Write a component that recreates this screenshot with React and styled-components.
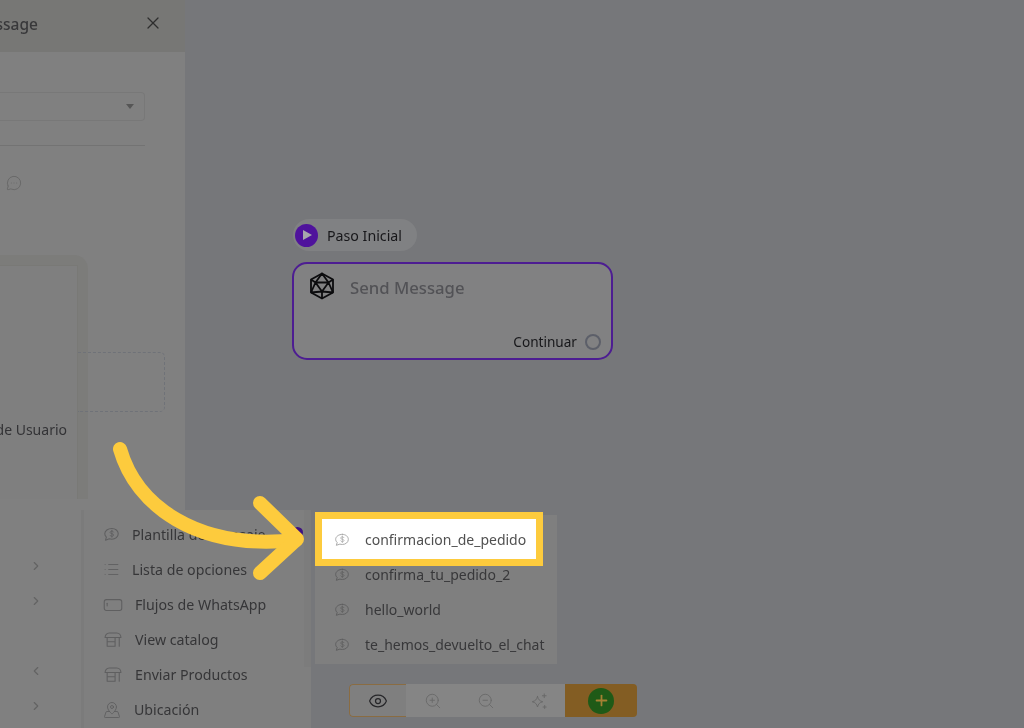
import React from 'react';
import styled, { createGlobalStyle } from 'styled-components';
import { X, Eye, ZoomIn, ZoomOut, Plus, ChevronRight, ChevronLeft, List, MapPinned, MessageCircleMore } from 'lucide-react';

const GlobalStyle = createGlobalStyle`
html, body {
  margin: 0;
  padding: 0;
  background: #76777a;
  font-family: "Noto Sans", "Open Sans", sans-serif;
}
`

const DollarChat = ({ size = 18 }) => (
  <svg width={size} height={size} viewBox="0 0 24 24" fill="none" stroke="currentColor" strokeWidth="1.5" strokeLinecap="round" strokeLinejoin="round">
    <path d="M12.5 3.5c5 0 9 3.3 9 7.6s-4 7.6-9 7.6c-1.3 0-2.5-.2-3.6-.6L3.5 20l1.3-4.3c-1.4-1.3-2.3-2.9-2.3-4.6 0-4.3 4.5-7.6 10-7.6z" />
    <path d="M15 8.5c-.5-.8-1.5-1.2-2.5-1.2-1.4 0-2.5.7-2.5 1.800 0 2.400 5 1.200 5 3.600 0 1.100-1.100 1.800-2.500 1.800-1 0-2-.4-2.500-1.200M12.500 6v9.800" strokeWidth="1.2" />
  </svg>
)

const FlowIcon = () => (
  <svg width="20" height="20" viewBox="0 0 24 24" fill="none" stroke="currentColor" strokeWidth="1.3" strokeLinecap="round">
    <rect x="1.500" y="5.500" width="21" height="13" rx="2.500" />
    <path d="M5 10v3" />
  </svg>
)

const StoreIcon = () => (
  <svg width="20" height="20" viewBox="0 0 24 24" fill="none" stroke="currentColor" strokeWidth="1.3" strokeLinecap="round" strokeLinejoin="round">
    <path d="M2.500 9c0-3 2-5.500 5-5.500h9c3 0 5 2.500 5 5.500z" />
    <path d="M5 9v10.500h9.500V9M5 14h9.500M19.500 9v10.500" />
  </svg>
)

const SparkleIcon = () => (
  <svg width="18" height="18" viewBox="0 0 24 24" fill="none" stroke="currentColor" strokeWidth="1.3" strokeLinecap="round" strokeLinejoin="round">
    <path d="M10 6c.9 4 2.800 6 7 7-4.200 1-6.100 3-7 7-.9-4-2.800-6-7-7 4.200-1 6.100-3 7-7z" />
    <path d="M19 2.500v5M16.500 5h5M19.500 18v4M17.500 20h4" />
  </svg>
)

const NodeLogo = () => (
  <svg width="26" height="28" viewBox="0 0 26 28" fill="none" stroke="#0c0c0e" strokeWidth="1.8" strokeLinejoin="round">
    <path d="M13 1.500 24 7.500v13L13 26.500 2 20.500v-13z" />
    <path d="M13 1.500 6.500 10.500h13zM6.500 10.500 13 19.500l6.500-9zM2 7.500l4.500 3M24 7.500l-4.500 3M2 20.500 6.500 10.500M24 20.500 19.500 10.500M2 20.500 13 19.500 24 20.500M13 19.500v7" />
  </svg>
)

const Page = styled.div`
position: relative;
display: flex;
width: 1024px;
height: 728px;
overflow: hidden;
background: #76777a;
filter: blur(0.45px);
`

const SidePanel = styled.aside`
flex: 0 0 185px;
min-width: 0;
height: 100%;
display: flex;
flex-direction: column;
background: #808080;
`

const PanelHeader = styled.header`
flex: 0 0 52px;
display: flex;
align-items: center;
justify-content: flex-end;
gap: 105px;
padding: 0 22px 0 0;
background: #777775;
color: #2e2e2e;
svg {
  flex: none;
  margin-top: -7px;
}
`

const PanelTitle = styled.h2`
margin: -4px 0 0;
font-size: 15.5px;
font-weight: 500;
color: #38383a;
white-space: nowrap;
`

const PanelBody = styled.div`
flex: 1;
display: flex;
flex-direction: column;
padding: 40px 40px 0 0;
`

const SelectBox = styled.div`
height: 29px;
box-sizing: border-box;
display: flex;
align-items: center;
justify-content: flex-end;
padding-right: 10px;
border: 1px solid #787878;
border-left: none;
border-radius: 0 4px 4px 0;
`

const Caret = styled.span`
width: 0;
height: 0;
border-left: 4.5px solid transparent;
border-right: 4.5px solid transparent;
border-top: 5px solid #565656;
`

const Divider = styled.div`
height: 1px;
margin-top: 24px;
background: #737373;
`

const BubbleIcon = styled.div`
height: 18px;
margin-top: 28px;
padding-left: 6px;
color: #636363;
`

const CardArea = styled.div`
position: relative;
width: 88px;
height: 244px;
margin-top: 63px;
box-sizing: border-box;
padding: 10px 10px 0 0;
background: #7c7c7a;
border-radius: 0 14px 0 0;
`

const CardInner = styled.div`
position: relative;
height: 100%;
box-sizing: border-box;
background: #7f7f7f;
border-right: 1px solid #797976;
border-top: 1px solid #797976;
`

const UserLabel = styled.span`
position: absolute;
right: 10px;
top: 154px;
font-size: 14px;
color: #333336;
white-space: nowrap;
`

const DropSlot = styled.div`
position: absolute;
left: 78px;
top: 86px;
width: 87px;
height: 60px;
box-sizing: border-box;
border: 1px dashed #6f7278;
border-left: none;
border-radius: 0 5px 5px 0;
`

const SideChevrons = styled.div`
flex: 1;
display: flex;
flex-direction: column;
padding: 49px 0 0 29px;
color: #636363;
`

const ChevronSlot = styled.div`
height: 35px;
display: flex;
align-items: center;
`

const Canvas = styled.main`
position: relative;
flex: 1;
`

const StepBadge = styled.div`
position: absolute;
left: 108px;
top: 219px;
height: 32px;
display: flex;
align-items: center;
gap: 9px;
padding: 0 15px 0 2px;
border-radius: 16px;
background: #808183;
color: #17171a;
font-size: 14.2px;
`

const PlayCircle = styled.span`
width: 23px;
height: 23px;
display: flex;
align-items: center;
justify-content: center;
border-radius: 50%;
background: #4f139c;
&::after {
  content: "";
  margin-left: 2px;
  border-left: 9px solid #a7a7ac;
  border-top: 5.5px solid transparent;
  border-bottom: 5.5px solid transparent;
}
`

const FlowNode = styled.section`
position: absolute;
left: 107px;
top: 262px;
width: 321px;
height: 98px;
box-sizing: border-box;
display: flex;
flex-direction: column;
justify-content: space-between;
padding: 8px 10px 7px 15px;
border: 2px solid #4d1d92;
border-radius: 15px;
background: #818182;
`

const NodeTop = styled.div`
display: flex;
align-items: flex-start;
gap: 15px;
`

const NodeTitle = styled.h3`
margin: 4px 0 0;
font-size: 16.7px;
font-weight: 500;
color: #525256;
`

const NodeBottom = styled.div`
display: flex;
align-items: center;
justify-content: flex-end;
gap: 8px;
font-size: 13.6px;
color: #17171a;
`

const Port = styled.span`
width: 12px;
height: 12px;
border: 2px solid #5c5f69;
border-radius: 50%;
`

const Menu = styled.nav`
position: absolute;
left: 81px;
top: 510px;
width: 230px;
height: 218px;
box-sizing: border-box;
padding: 7px 0 0 19px;
background: #7f7f7f;
border-left: 3px solid #7b7b7b;
&::after {
  content: "";
  position: absolute;
  right: 0;
  top: 0;
  width: 7px;
  height: 157px;
  background: #7c7c7c;
}
`

const MenuRow = styled.div`
height: 35px;
display: flex;
align-items: center;
gap: ${p => p.$gap || 12}px;
font-size: 14.2px;
color: #363638;
white-space: nowrap;
svg {
  flex: none;
  color: #5f5f60;
}
`

const SubMenu = styled.div`
position: absolute;
left: 315px;
top: 515px;
width: 242px;
height: 149px;
box-sizing: border-box;
padding: 7px 0 0 19px;
background: #7f7f7f;
z-index: 2;
`

const SubRow = styled.div`
position: relative;
height: 35px;
display: flex;
align-items: center;
gap: 15px;
font-size: 14px;
color: ${p => p.$active ? '#505050' : '#38383a'};
white-space: nowrap;
svg {
  flex: none;
  color: ${p => p.$active ? '#aaa' : '#5f5f60'};
}
${p => p.$active && `
  &::before {
    content: "";
    position: absolute;
    z-index: -1;
    left: -19px;
    top: -10px;
    width: 228px;
    height: 54px;
    box-sizing: border-box;
    border: 7px solid #fdcb3d;
    background: #fff;
  }
`}
`

const Toolbar = styled.div`
position: absolute;
left: 349px;
top: 684px;
width: 288px;
height: 33px;
display: flex;
border-radius: 4px;
overflow: hidden;
`

const ToolButton = styled.button`
width: ${p => p.$width}px;
padding: 0;
display: flex;
align-items: center;
justify-content: center;
border: none;
background: #858585;
color: #696969;
`

const EyeButton = styled(ToolButton)`
box-sizing: border-box;
background: #7f7f7f;
color: #27272a;
border: 1px solid #8a6c42;
border-right: none;
border-radius: 4px 0 0 4px;
`

const AddButton = styled.button`
flex: 1;
padding: 0;
display: flex;
align-items: center;
justify-content: center;
border: none;
background: #835d23;
`

const AddCircle = styled.span`
width: 26px;
height: 26px;
display: flex;
align-items: center;
justify-content: center;
border-radius: 50%;
background: #1f5a17;
color: #a58033;
`

const PurpleDot = styled.span`
position: absolute;
left: 292px;
top: 527px;
width: 11px;
height: 11px;
border-radius: 50%;
background: #3e1180;
`

const ArrowLayer = styled.svg`
position: absolute;
left: 0;
top: 0;
z-index: 3;
pointer-events: none;
`

const menuItems = [
  { label: 'Plantilla de mensaje', icon: <DollarChat size={17} />, gap: 12 },
  { label: 'Lista de opciones', icon: <List size={17} strokeWidth={1.3} />, gap: 12 },
  { label: 'Flujos de WhatsApp', icon: <FlowIcon />, gap: 12 },
  { label: 'View catalog', icon: <StoreIcon />, gap: 12 },
  { label: 'Enviar Productos', icon: <StoreIcon />, gap: 12 },
  { label: 'Ubicación', icon: <MapPinned size={18} strokeWidth={1.2} />, gap: 13 },
]

const templates = ['confirmacion_de_pedido', 'confirma_tu_pedido_2', 'hello_world', 'te_hemos_devuelto_el_chat']

const App = () => {
  return (
    <Page>
      <GlobalStyle />
      <SidePanel>
        <PanelHeader>
          <PanelTitle>Send Message</PanelTitle>
          <X size={20} strokeWidth={1.5} />
        </PanelHeader>
        <PanelBody>
          <SelectBox><Caret /></SelectBox>
          <Divider />
          <BubbleIcon><MessageCircleMore size={16} strokeWidth={1.2} /></BubbleIcon>
          <CardArea>
            <CardInner>
              <UserLabel>Nombre de Usuario</UserLabel>
              <DropSlot />
            </CardInner>
          </CardArea>
          <SideChevrons>
            <ChevronSlot><ChevronRight size={14} /></ChevronSlot>
            <ChevronSlot><ChevronRight size={14} /></ChevronSlot>
            <ChevronSlot />
            <ChevronSlot><ChevronLeft size={14} /></ChevronSlot>
            <ChevronSlot><ChevronRight size={14} /></ChevronSlot>
          </SideChevrons>
        </PanelBody>
      </SidePanel>

      <Canvas>
        <StepBadge><PlayCircle />Paso Inicial</StepBadge>
        <FlowNode>
          <NodeTop>
            <NodeLogo />
            <NodeTitle>Send Message</NodeTitle>
          </NodeTop>
          <NodeBottom>Continuar<Port /></NodeBottom>
        </FlowNode>
      </Canvas>

      <Menu>
        {menuItems.map(item => (
          <MenuRow key={item.label} $gap={item.gap}>{item.icon}{item.label}</MenuRow>
        ))}
      </Menu>
      <PurpleDot />

      <SubMenu>
        {templates.map((name, i) => (
          <SubRow key={name} $active={i === 0}><DollarChat size={16} />{name}</SubRow>
        ))}
      </SubMenu>

      <Toolbar>
        <EyeButton $width={57}><Eye size={20} strokeWidth={1.5} /></EyeButton>
        <ToolButton $width={53}><ZoomIn size={18} strokeWidth={1.2} /></ToolButton>
        <ToolButton $width={53}><ZoomOut size={18} strokeWidth={1.2} /></ToolButton>
        <ToolButton $width={53}><SparkleIcon /></ToolButton>
        <AddButton><AddCircle><Plus size={17} strokeWidth={2.5} /></AddCircle></AddButton>
      </Toolbar>

      <ArrowLayer width="1024" height="728" viewBox="0 0 1024 728" fill="none" stroke="#fdcb3d" strokeWidth="14" strokeLinecap="round" strokeLinejoin="round">
        <path d="M120 449C136 505 196 551 296 540" />
        <path d="M260 503 297 539 260 573" />
      </ArrowLayer>
    </Page>
  )
}

export default App;
